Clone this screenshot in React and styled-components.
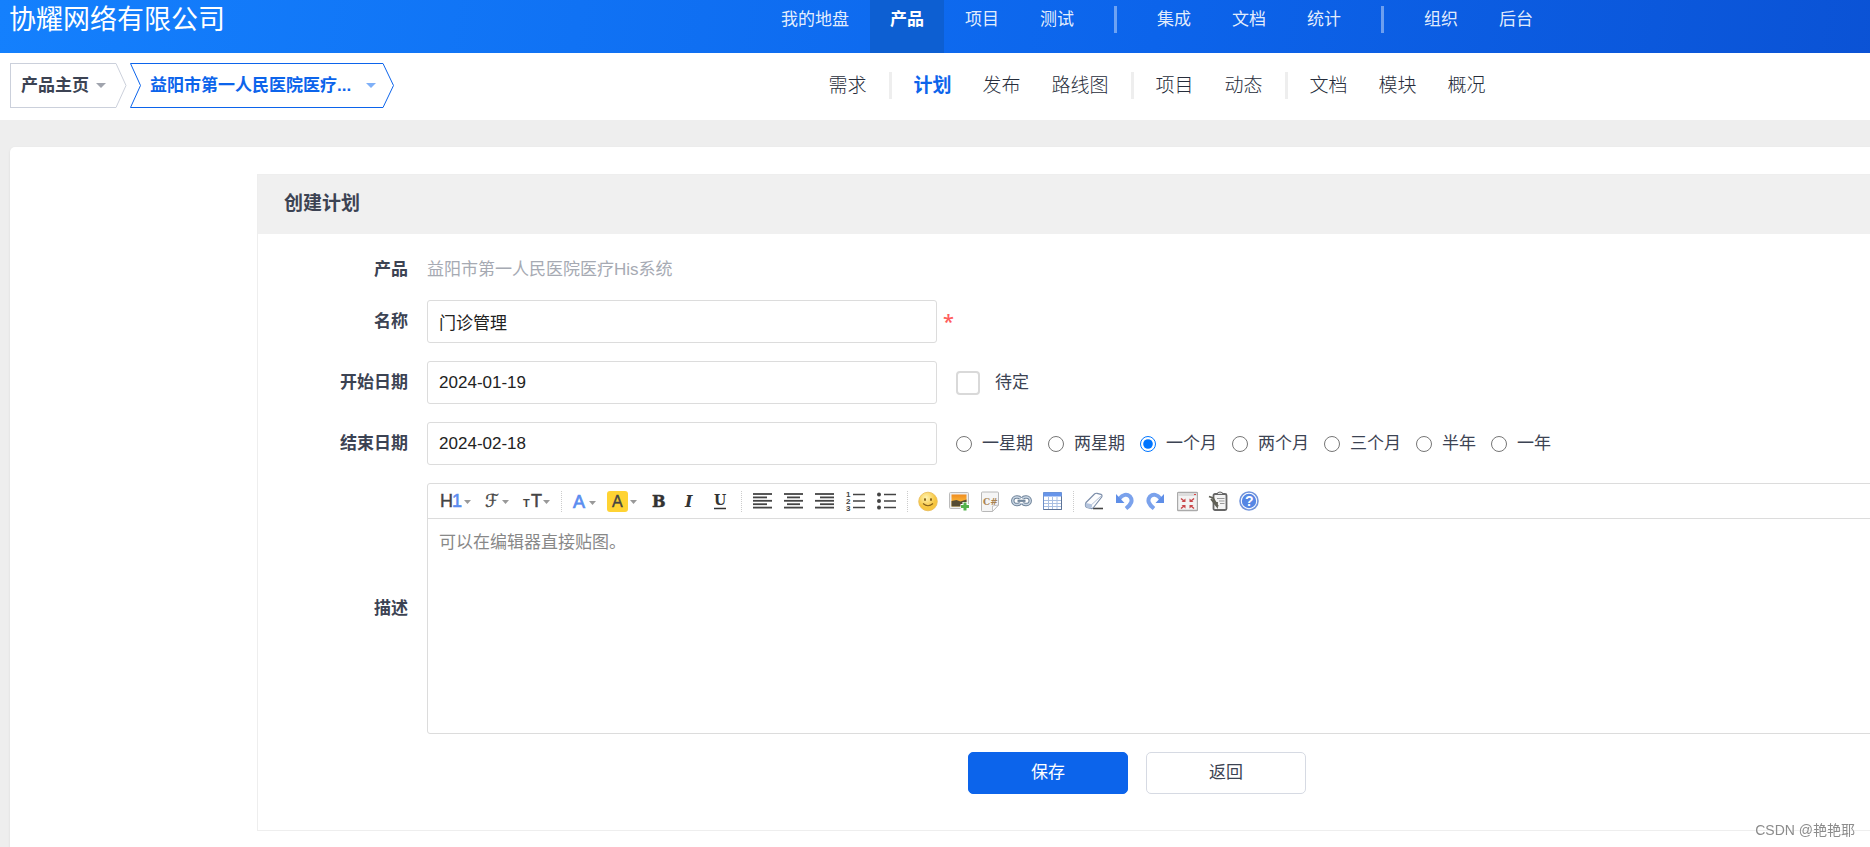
import React, { useState } from "react";
import styled, { createGlobalStyle, css } from "styled-components";

const GlobalStyle = createGlobalStyle`
  * {
    box-sizing: border-box;
  }
  body {
    margin: 0;
    overflow-x: hidden;
    background: #eeeeee;
    color: #3c4353;
    font-family: "Liberation Sans", "Noto Sans CJK SC", sans-serif;
    font-size: 17px;
    line-height: 24px;
  }
  button,
  input,
  textarea {
    font: inherit;
    color: inherit;
  }
  a {
    color: inherit;
    text-decoration: none;
  }
`;

/* the workspace is wider than the window, its right part is cut off */
const Viewport = styled.div`
  overflow: hidden;
  min-height: 100vh;
`;

const Page = styled.div`
  width: 123.75vw;
`;

const Header = styled.header`
  display: grid;
  grid-template-columns: 1fr auto 1fr;
  height: 53px;
  background: linear-gradient(100deg, #1480fd, #0c64eb 50%, #0a48c8);
`;

const Company = styled.h1`
  margin: 0;
  padding: 0 0 14px 9px;
  align-self: center;
  color: #fff;
  font-size: 27px;
  font-weight: 400;
  line-height: 38px;
  white-space: nowrap;
`;

const MainNav = styled.nav`
  display: flex;
  gap: 1px;
`;

const MainLink = styled.a`
  display: flex;
  align-items: center;
  padding: 0 20px 14px;
  color: rgba(255, 255, 255, 0.9);
  white-space: nowrap;
  ${({ $active }) =>
    $active &&
    css`
      color: #fff;
      font-weight: 700;
      background: #0d5fd2;
    `}
`;

const MainDivider = styled.span`
  width: 3px;
  height: 27px;
  margin: 6px 19px;
  background: rgba(255, 255, 255, 0.4);
`;

const SubHeader = styled.div`
  display: grid;
  grid-template-columns: 1fr auto 1fr;
  align-items: center;
  height: 67px;
  padding-bottom: 2px;
  background: #fff;
`;

const Crumbs = styled.div`
  display: flex;
  gap: 3px;
  padding-left: 10px;
`;

const Crumb = styled.button`
  display: flex;
  align-items: stretch;
  height: 45px;
  padding: 0;
  border: 0;
  background: none;
  font-weight: 700;
  color: ${({ $active }) => ($active ? "#0c64eb" : "#3c4353")};
  --line: ${({ $active }) => ($active ? "#0c64eb" : "#cbd0db")};
  --caret: ${({ $active }) => ($active ? "#7fb0f8" : "#a0a4ad")};
`;

const CrumbBody = styled.span`
  display: flex;
  align-items: center;
  gap: 7px;
  padding: 0 10px;
  border: 1px solid var(--line);
  border-right: 0;
  white-space: nowrap;
  ${({ $notched }) =>
    $notched &&
    css`
      gap: 15px;
      padding: 0 7px 0 9px;
      border-left: 0;
    `}
`;

const CrumbEdge = styled.svg`
  width: 11px;
  height: 45px;
  fill: none;
  stroke: var(--line);
`;

const CrumbCaret = styled.span`
  border: 5px solid transparent;
  border-top-color: var(--caret);
  border-bottom: 0;
`;

const SubNav = styled.nav`
  display: flex;
  align-items: center;
  gap: 1px;
`;

const SubLink = styled.a`
  padding: 0 15px;
  font-size: 19px;
  font-weight: ${({ $active }) => ($active ? 700 : 300)};
  line-height: 28px;
  color: ${({ $active }) => ($active ? "#0c64eb" : "#272d3b")};
  white-space: nowrap;
`;

const SubDivider = styled.span`
  width: 3px;
  height: 27px;
  margin: 0 6px;
  background: #eeeeee;
`;

const Content = styled.main`
  margin: 27px 10px 0;
  padding: 27px 0;
  min-height: calc(100vh - 147px);
  background: #fff;
  border-radius: 5px 5px 0 0;
  box-shadow: 0 1px 3px rgba(0, 0, 0, 0.08);
`;

const Panel = styled.section`
  max-width: 1800px;
  margin: 0 auto;
  border: 1px solid #eeeeee;
`;

const PanelTitle = styled.h2`
  margin: 0;
  padding: 15px 26px 16px;
  background: #f0f0f0;
  font-size: 19px;
  line-height: 28px;
`;

const Form = styled.form`
  display: flex;
  flex-direction: column;
  gap: 18px;
  padding: 23px 40px 36px 0;
`;

const Row = styled.div`
  display: grid;
  grid-template-columns: 150px 510px 1fr;
  column-gap: 19px;
  align-items: center;
  min-height: 25px;
`;

const Label = styled.label`
  font-weight: 700;
  text-align: right;
`;

const ProductName = styled.span`
  color: #a6aab3;
`;

const TextField = styled.input`
  width: 100%;
  height: 43px;
  padding: 0 11px;
  border: 1px solid #dcdcdc;
  border-radius: 3px;
  background: #fff;
  color: #222;
  outline: none;
`;

const Required = styled.span`
  margin-left: -13px;
  color: #ff5d5d;
  font-family: "Open Sans", sans-serif;
  font-size: 20px;
  font-weight: 600;
`;

const Choices = styled.div`
  display: flex;
  gap: 15px;
`;

const Choice = styled.label`
  display: flex;
  align-items: center;
  gap: 10px;
  white-space: nowrap;
`;

const Radio = styled.input`
  width: 16px;
  height: 16px;
  margin: 0;
`;

const Checkbox = styled.input`
  appearance: none;
  width: 24px;
  height: 24px;
  margin: 0 5px 0 0;
  border: 2px solid #d9d9d9;
  border-radius: 4px;
  background: #fff;
  &:checked {
    background: #0c64eb;
  }
`;

const Editor = styled.div`
  grid-column: 2 / 4;
  border: 1px solid #dcdcdc;
  border-radius: 3px;
`;

const Toolbar = styled.div`
  display: flex;
  align-items: center;
  gap: 10px;
  height: 35px;
  padding: 0 12px;
  border-bottom: 1px solid #dcdcdc;
`;

const Tool = styled.button`
  display: flex;
  flex: none;
  padding: 0;
  border: 0;
  background: none;
  svg {
    display: block;
  }
`;

const ToolDivider = styled.span`
  flex: none;
  height: 21px;
  border-left: 1px dotted #cccccc;
`;

const Description = styled.textarea`
  display: block;
  width: 100%;
  height: 214px;
  padding: 12px 11px;
  border: 0;
  outline: none;
  resize: none;
  background: none;
  &::placeholder {
    color: #888;
    opacity: 1;
  }
`;

const Actions = styled.div`
  display: flex;
  justify-content: center;
  gap: 18px;
`;

const ActionButton = styled.button`
  width: 160px;
  height: 42px;
  border: 1px solid ${({ $primary }) => ($primary ? "#0c64eb" : "#d6dae3")};
  border-radius: 5px;
  background: ${({ $primary }) => ($primary ? "#0c64eb" : "#fff")};
  color: ${({ $primary }) => ($primary ? "#fff" : "#3c4353")};
`;

const Watermark = styled.span`
  position: fixed;
  right: 15px;
  bottom: 5px;
  color: #8c8c8c;
  font-size: 14px;
  text-shadow: 0 0 2px #fff;
`;

const MAIN_NAV = ["我的地盘", "产品", "项目", "测试", null, "集成", "文档", "统计", null, "组织", "后台"];
const SUB_NAV = ["需求", null, "计划", "发布", "路线图", null, "项目", "动态", null, "文档", "模块", "概况"];
const PERIODS = ["一星期", "两星期", "一个月", "两个月", "三个月", "半年", "一年"];

const SANS = "Liberation Sans, sans-serif";
const SERIF = "DejaVu Serif, serif";

const Down = ({ x, y = 9 }) => <path d={`M${x} ${y}h7l-3.5 4z`} fill="#999" />;

const Lines = ({ rows }) => (
  <g stroke="#444" strokeWidth="1.8">
    {rows.map(([x1, x2], i) => (
      <path key={i} d={`M${x1} ${3 + i * 3.4}H${x2}`} />
    ))}
  </g>
);

const TOOLS = [
  {
    name: "标题",
    width: 33,
    art: (
      <>
        <text x="0" y="16" fontFamily={SANS} fontSize="18" fill="#444" stroke="#444" strokeWidth=".4">H</text>
        <text x="12" y="16" fontFamily={SANS} fontSize="18" fill="#5b8df0" stroke="#5b8df0" strokeWidth=".6">1</text>
        <Down x={24} />
      </>
    ),
  },
  {
    name: "字体",
    width: 29,
    art: (
      <>
        <text x="2" y="16" fontFamily="DejaVu Sans, sans-serif" fontSize="18" fill="#444" stroke="#444" strokeWidth=".3">ℱ</text>
        <Down x={19} />
      </>
    ),
  },
  {
    name: "文字大小",
    width: 29,
    art: (
      <>
        <text x="1" y="16" fontFamily={SANS} fontSize="11" fontWeight="700" fill="#444">T</text>
        <text x="9" y="16" fontFamily={SANS} fontSize="18" fill="#444" stroke="#444" strokeWidth=".5">T</text>
        <Down x={21} />
      </>
    ),
  },
  null,
  {
    name: "文字颜色",
    width: 25,
    art: (
      <>
        <text x="1" y="17" fontFamily={SANS} fontSize="18" fill="#5b8df0" stroke="#5b8df0" strokeWidth=".7">A</text>
        <Down x={17} y={10} />
      </>
    ),
  },
  {
    name: "文字背景",
    width: 31,
    art: (
      <>
        <rect width="21" height="21" rx="3" fill="#ffd333" />
        <text x="5" y="16" fontFamily={SANS} fontSize="16" fill="#444" stroke="#444" strokeWidth=".4">A</text>
        <Down x={23} />
      </>
    ),
  },
  {
    name: "粗体",
    art: <text x="4" y="16" fontFamily={SERIF} fontSize="16" fontWeight="700" fill="#333" stroke="#333" strokeWidth=".5">B</text>,
  },
  {
    name: "斜体",
    art: <text x="6" y="16" fontFamily={SERIF} fontSize="16" fontWeight="700" fontStyle="italic" fill="#333">I</text>,
  },
  {
    name: "下划线",
    art: (
      <>
        <text x="4" y="14" fontFamily={SERIF} fontSize="14" fontWeight="700" fill="#333">U</text>
        <path d="M4 17.5h12" stroke="#333" strokeWidth="1.5" />
      </>
    ),
  },
  null,
  { name: "左对齐", art: <Lines rows={[[1, 20], [1, 15], [1, 20], [1, 15], [1, 20]]} /> },
  { name: "居中", art: <Lines rows={[[1, 20], [4, 17], [1, 20], [4, 17], [1, 20]]} /> },
  { name: "右对齐", art: <Lines rows={[[1, 20], [6, 20], [1, 20], [6, 20], [1, 20]]} /> },
  {
    name: "编号",
    art: (
      <>
        <path d="M8 3.5h12M8 10h12M8 16.5h12" stroke="#444" strokeWidth="1.6" />
        <g fontFamily={SANS} fontSize="8" fontWeight="700" fill="#444">
          <text x="1" y="6">1</text>
          <text x="1" y="13">2</text>
          <text x="1" y="20">3</text>
        </g>
      </>
    ),
  },
  {
    name: "项目符号",
    art: (
      <>
        <path d="M8 3.5h12M8 10h12M8 16.5h12" stroke="#444" strokeWidth="1.6" />
        <g fill="#444">
          <circle cx="3" cy="3.5" r="2" />
          <circle cx="3" cy="10" r="2" />
          <circle cx="3" cy="16.5" r="2" />
        </g>
      </>
    ),
  },
  null,
  {
    name: "插入表情",
    art: (
      <>
        <circle cx="10" cy="10.5" r="9.3" fill="url(#face)" stroke="#e9b950" strokeWidth=".8" />
        <ellipse cx="7" cy="8.5" rx="1" ry="1.6" fill="#85601a" />
        <ellipse cx="13" cy="8.5" rx="1" ry="1.6" fill="#85601a" />
        <path d="M5 12.5q5 4.5 10 0" fill="none" stroke="#85601a" strokeWidth="1.1" />
      </>
    ),
  },
  {
    name: "插入图片",
    art: (
      <>
        <rect x=".5" y="1.5" width="19" height="16" rx="1" fill="#eee" stroke="#bbb" />
        <path d="M2.5 3.5h15v12h-15z" fill="url(#sunset)" />
        <path d="M2.5 10l5-1 4 1.5 6-2v7h-15z" fill="#544b33" />
        <path d="M16 11v9M11.5 15.5h9" stroke="#fff" strokeWidth="5" />
        <path d="M16 11.5v8M12 15.5h8" stroke="#55b34d" strokeWidth="3" />
      </>
    ),
  },
  {
    name: "插入程序代码",
    art: (
      <>
        <path d="M2.5 1h15q1 0 1 1v12l-6 6.5h-10q-1 0-1-1v-17.5q0-1 1-1z" fill="#f5f5f5" stroke="#b8b8b8" />
        <path d="M12.5 20.5v-5.5l6-1z" fill="#fff" stroke="#b8b8b8" strokeWidth=".8" />
        <text x="3" y="14" fontFamily={SERIF} fontSize="9" fontWeight="700" fill="#a98352">C#</text>
      </>
    ),
  },
  {
    name: "超级链接",
    art: (
      <>
        <g fill="none" stroke="#71859b" strokeWidth="3.4">
          <path d="M9.5 7.5q-1-1.5-3-1.5h-1a3.7 3.7 0 0 0 0 7.5h1q2 0 3-1.5" />
          <path d="M11.5 7.5q1-1.5 3-1.5h1a3.7 3.7 0 0 1 0 7.5h-1q-2 0-3-1.5" />
        </g>
        <g fill="none" stroke="#c9d6e4" strokeWidth="1.4">
          <path d="M9.5 7.5q-1-1.5-3-1.5h-1a3.7 3.7 0 0 0 0 7.5h1q2 0 3-1.5" />
          <path d="M11.5 7.5q1-1.5 3-1.5h1a3.7 3.7 0 0 1 0 7.5h-1q-2 0-3-1.5" />
        </g>
        <path d="M6.5 9.8h8" stroke="#71859b" strokeWidth="2.2" />
      </>
    ),
  },
  {
    name: "表格",
    art: (
      <>
        <path d="M1.5 1.5h18v17h-18z" fill="#fff" stroke="#6d8fc9" />
        <path d="M1.5 1.5h18v4h-18z" fill="#6795ea" />
        <path d="M2 9.5h17M2 12.5h17M2 15.5h17M6.5 6v12M10.5 6v12M15 6v12" stroke="#a9bfe2" />
        <path d="M1.5 18.5h18v-13" fill="none" stroke="#5c7397" />
      </>
    ),
  },
  null,
  {
    name: "删除格式",
    art: (
      <>
        <path d="M9 17.5h10" stroke="#444" strokeWidth="1.6" />
        <path d="M2 11.5l8.5-8.5q1-1 2.500-.7l4 1q1.500.7.7 2.700l-8.200 10.500q-1 1.300-2.500 1l-4-1q-2.500-1-1-5z" fill="#fdfdfe" stroke="#7c8eaa" strokeWidth="1.200" />
        <path d="M2 12l6 1.300q.8 1.700-1 4.200l-4-1q-2.300-1-1-4.500z" fill="#b4c4dd" />
        <path d="M8 13.300l9-8.300" stroke="#9fb0ca" strokeWidth=".8" />
      </>
    ),
  },
  {
    name: "后退",
    art: (
      <>
        <path d="M4 8q6-7 11-2.5 4.5 5.5-4 12" fill="none" stroke="#7ba2ec" strokeWidth="4" />
        <path d="M1 3v9h8.5z" fill="#5f8fe8" />
      </>
    ),
  },
  {
    name: "前进",
    art: (
      <>
        <path d="M15 8q-6-7-11-2.5-4.5 5.5 4 12" fill="none" stroke="#7ba2ec" strokeWidth="4" />
        <path d="M18 3v9h-8.5z" fill="#5f8fe8" />
      </>
    ),
  },
  {
    name: "全屏显示",
    art: (
      <>
        <rect x=".5" y="1.5" width="20" height="18" rx="1" fill="#f3f3f3" stroke="#aaa" strokeWidth="1.4" />
        <path d="M1 2h19v3h-19z" fill="#ddd" />
        <path d="M17 3.5h2" stroke="#d44" strokeWidth="1.2" />
        <path d="M8.5 11v-3.5l-4 3.500zM12.500 11v-3.500l4 3.500zM8.500 14v3.500l-4-3.500zM12.500 14v3.500l4-3.500z" fill="#c9474a" />
        <path d="M4 7.500l3 2.500M17 7.500l-3 2.500M4 17.500l3-2.500M17 17.500l-3-2.500" stroke="#c9474a" strokeWidth="1.500" />
      </>
    ),
  },
  {
    name: "源代码",
    art: (
      <>
        <rect x="5.5" y="3" width="13" height="16" rx="1.5" fill="#f4f4f4" stroke="#666" strokeWidth="1.8" />
        <path d="M9 3.5q0-2.5 3-2.5t3 2.500z" fill="#ddd" stroke="#666" />
        <path d="M9 7.5h7.500M11 10h5.500M12 12.500h4.500" stroke="#999" />
        <path d="M1 5.5l4 1.500 5 8.500M3 8l6 7.500v-4.500" fill="none" stroke="#5f5f55" strokeWidth="1.8" />
      </>
    ),
  },
  {
    name: "帮助",
    art: (
      <>
        <circle cx="10" cy="10" r="9" fill="#fff" stroke="#7194dc" strokeWidth="1.6" />
        <circle cx="10" cy="10" r="7.2" fill="#5586e4" />
        <text x="6" y="15" fontFamily={SANS} fontSize="14" fontWeight="700" fill="#fff">?</text>
      </>
    ),
  },
];

const App = () => {
  const [name, setName] = useState("门诊管理");
  const [begin, setBegin] = useState("2024-01-19");
  const [end, setEnd] = useState("2024-02-18");
  const [period, setPeriod] = useState("一个月");

  return (
    <Viewport>
      <GlobalStyle />
      <Page>
        <Header>
          <Company>协耀网络有限公司</Company>
          <MainNav>
            {MAIN_NAV.map((item, i) =>
              item ? (
                <MainLink key={i} href="#" $active={item === "产品"}>{item}</MainLink>
              ) : (
                <MainDivider key={i} />
              )
            )}
          </MainNav>
        </Header>
        <SubHeader>
          <Crumbs>
            <Crumb type="button">
              <CrumbBody>
                产品主页
                <CrumbCaret />
              </CrumbBody>
              <CrumbEdge viewBox="0 0 11 45">
                <path d="M0 .5L10 22.5 0 44.5" />
              </CrumbEdge>
            </Crumb>
            <Crumb type="button" $active>
              <CrumbEdge viewBox="0 0 11 45">
                <path d="M11 .5H.5L10.5 22.5.5 44.5H11" />
              </CrumbEdge>
              <CrumbBody $notched>
                益阳市第一人民医院医疗...
                <CrumbCaret />
              </CrumbBody>
              <CrumbEdge viewBox="0 0 11 45">
                <path d="M0 .5L10.5 22.5 0 44.5" />
              </CrumbEdge>
            </Crumb>
          </Crumbs>
          <SubNav>
            {SUB_NAV.map((item, i) =>
              item ? (
                <SubLink key={i} href="#" $active={item === "计划"}>{item}</SubLink>
              ) : (
                <SubDivider key={i} />
              )
            )}
          </SubNav>
        </SubHeader>
        <Content>
          <Panel>
            <PanelTitle>创建计划</PanelTitle>
            <Form onSubmit={(e) => e.preventDefault()}>
              <Row>
                <Label as="span">产品</Label>
                <ProductName>益阳市第一人民医院医疗His系统</ProductName>
              </Row>
              <Row>
                <Label htmlFor="title">名称</Label>
                <TextField id="title" value={name} onChange={(e) => setName(e.target.value)} />
                <Required>*</Required>
              </Row>
              <Row>
                <Label htmlFor="begin">开始日期</Label>
                <TextField id="begin" value={begin} onChange={(e) => setBegin(e.target.value)} />
                <Choice>
                  <Checkbox type="checkbox" />
                  待定
                </Choice>
              </Row>
              <Row>
                <Label htmlFor="end">结束日期</Label>
                <TextField id="end" value={end} onChange={(e) => setEnd(e.target.value)} />
                <Choices>
                  {PERIODS.map((item) => (
                    <Choice key={item}>
                      <Radio
                        type="radio"
                        name="period"
                        checked={item === period}
                        onChange={() => setPeriod(item)}
                      />
                      {item}
                    </Choice>
                  ))}
                </Choices>
              </Row>
              <Row>
                <Label htmlFor="desc">描述</Label>
                <Editor>
                  <Toolbar>
                    {TOOLS.map((tool, i) =>
                      tool ? (
                        <Tool key={i} type="button" aria-label={tool.name}>
                          <svg width={tool.width || 21} height="21">{tool.art}</svg>
                        </Tool>
                      ) : (
                        <ToolDivider key={i} />
                      )
                    )}
                  </Toolbar>
                  <Description id="desc" placeholder="可以在编辑器直接贴图。" />
                </Editor>
              </Row>
              <Actions>
                <ActionButton type="submit" $primary>保存</ActionButton>
                <ActionButton type="button">返回</ActionButton>
              </Actions>
            </Form>
          </Panel>
        </Content>
      </Page>
      <Watermark>CSDN @艳艳耶</Watermark>
      <svg width="0" height="0" aria-hidden="true">
        <defs>
          <radialGradient id="face" cx=".4" cy=".3">
            <stop offset="0" stopColor="#fff3b0" />
            <stop offset="1" stopColor="#f7c640" />
          </radialGradient>
          <linearGradient id="sunset" x2="0" y2="1">
            <stop offset="0" stopColor="#f08c1e" />
            <stop offset="1" stopColor="#ffcf4a" />
          </linearGradient>
        </defs>
      </svg>
    </Viewport>
  );
};

export default App;
